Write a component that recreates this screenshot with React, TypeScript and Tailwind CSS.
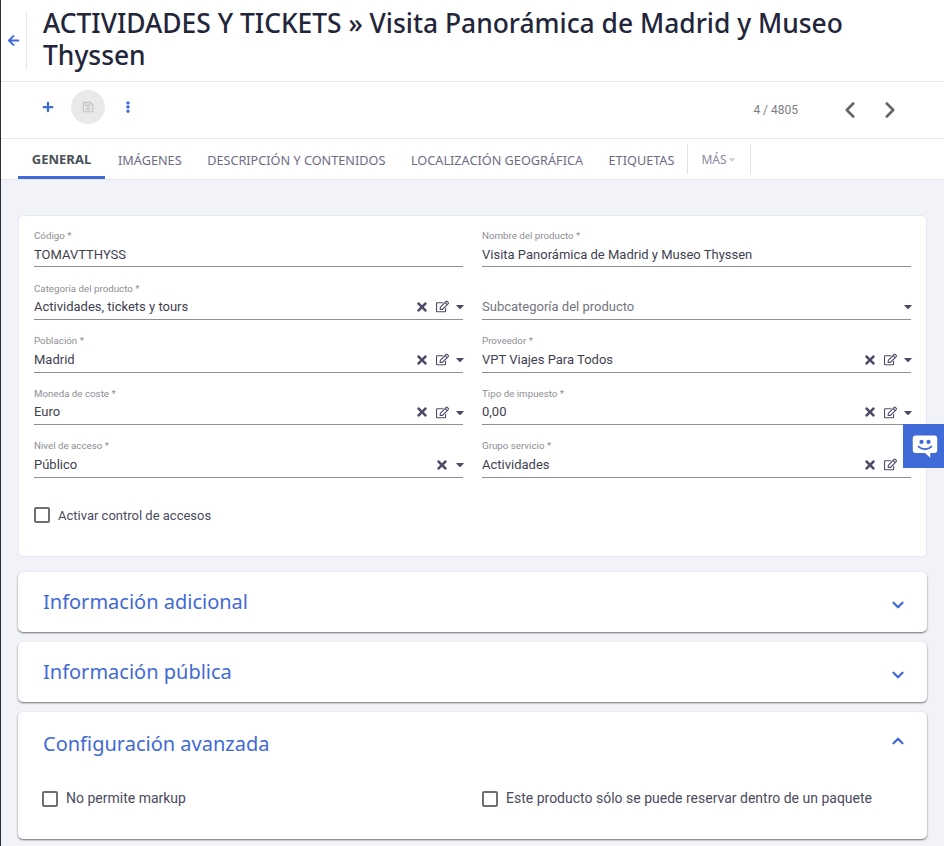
import React from 'react';
import { ChevronDown, ChevronLeft, ChevronRight, ChevronUp } from 'lucide-react';
import { FaArrowLeft, FaCaretDown, FaEllipsisV, FaPlus, FaRegEdit, FaRegSave, FaTimes } from 'react-icons/fa';

const tabs = ['IMÁGENES', 'DESCRIPCIÓN Y CONTENIDOS', 'LOCALIZACIÓN GEOGRÁFICA', 'ETIQUETAS'];

type FieldProps = {
  label?: string;
  value: string;
  clear?: boolean;
  edit?: boolean;
  caret?: boolean;
  muted?: boolean;
};

const fields: FieldProps[] = [
  { label: 'Código *', value: 'TOMAVTTHYSS' },
  { label: 'Nombre del producto *', value: 'Visita Panorámica de Madrid y Museo Thyssen' },
  { label: 'Categoría del producto *', value: 'Actividades, tickets y tours', clear: true, edit: true, caret: true },
  { value: 'Subcategoría del producto', caret: true, muted: true },
  { label: 'Población *', value: 'Madrid', clear: true, edit: true, caret: true },
  { label: 'Proveedor *', value: 'VPT Viajes Para Todos', clear: true, edit: true, caret: true },
  { label: 'Moneda de coste *', value: 'Euro', clear: true, edit: true, caret: true },
  { label: 'Tipo de impuesto *', value: '0,00', clear: true, edit: true, caret: true },
  { label: 'Nivel de acceso *', value: 'Público', clear: true, caret: true },
  { label: 'Grupo servicio *', value: 'Actividades', clear: true, edit: true },
];

const Field = ({ label, value, clear, edit, caret, muted }: FieldProps) => (
  <div className="h-[52.55px]">
    <div className="h-[14px] text-[9.75px] leading-[14px] text-[#8d8d96]">{label}</div>
    <div className="flex h-[24.45px] items-center border-b border-[#8f8f8f] pb-[0.6px]">
      <span className={`flex-1 text-[13px] ${muted ? 'text-[#74747f]' : 'text-[#3f3f52]'}`}>{value}</span>
      <div className="flex items-center text-[#4e4a67]">
        {clear && <FaTimes className="mr-[9px] h-[14px] w-[10px]" />}
        {edit && <FaRegEdit className="mr-[1px] h-[13px] w-[13px]" />}
        {caret ? (
          <FaCaretDown className={`${edit ? 'ml-[6px]' : 'ml-0'} mr-[-1px] h-[13px] w-[8px]`} />
        ) : (
          clear && <span className="ml-[6px] mr-[-1px] h-[13px] w-[8px]" />
        )}
      </div>
    </div>
  </div>
);

const Check = ({ label, big }: { label: string; big?: boolean }) => (
  <label className={`flex items-center gap-[8px] text-[#4b4b5e] ${big ? 'text-[14px]' : 'text-[13px]'}`}>
    <span className="h-[16px] w-[16px] rounded-[2px] border-2 border-[#6f6f6f] bg-white" />
    {label}
  </label>
);

const Section = ({ title, open, children }: { title: string; open?: boolean; children?: React.ReactNode }) => (
  <div className="rounded-[5px] bg-white shadow-[0_1px_2px_rgba(0,0,0,0.55)]">
    <div className="flex h-[60px] items-center justify-between pl-[25px] pr-[20px]">
      <h3 className={`font-['Noto_Sans',sans-serif] text-[20px] text-[#4169d6] ${open ? 'pt-[4px]' : ''}`}>{title}</h3>
      {open ? (
        <ChevronUp className="mb-[2px] h-[18px] w-[18px] text-[#3f6ad8]" strokeWidth={3} />
      ) : (
        <ChevronDown className="mt-[6px] h-[18px] w-[18px] text-[#3f6ad8]" strokeWidth={3} />
      )}
    </div>
    {children}
  </div>
);

export default function App() {
  return (
    <div className="relative h-[846px] overflow-hidden border-l border-[#2b2d3e] bg-[#f1f3f8] font-['Roboto',sans-serif]">
      {/* title bar */}
      <div className="flex h-[82px] items-center border-b border-[#e6e6ea] bg-white">
        <div className="flex h-[58px] w-[26px] items-center justify-center border-r border-[#e6e6ea]">
          <FaArrowLeft className="mr-[1px] h-[13px] w-[13px] text-[#3f6ad8]" />
        </div>
        <h1 className="mb-[3px] ml-[16px] w-[870px] font-['Noto_Sans',sans-serif] text-[26.4px] font-medium leading-[32px] text-[#23263a]">
          ACTIVIDADES Y TICKETS » Visita Panorámica de Madrid y Museo Thyssen
        </h1>
      </div>

      {/* toolbar */}
      <div className="flex h-[57px] items-center border-b border-[#e6e6ea] bg-white pl-[41px] pr-[41px]">
        <div className="mb-[6px] flex items-center">
          <FaPlus className="h-[12px] w-[12px] text-[#3f6ad8]" />
          <div className="ml-[17px] flex h-[34px] w-[34px] items-center justify-center rounded-full bg-[#e9e9e9]">
            <FaRegSave className="h-[12px] w-[12px] text-[#c4c4c4]" />
          </div>
          <FaEllipsisV className="ml-[17px] h-[12px] w-[12px] text-[#3f6ad8]" />
        </div>
        <span className="ml-auto text-[12px] text-[#7d7d86]">4 / 4805</span>
        <ChevronLeft className="ml-[39px] h-[26px] w-[26px] text-[#666]" strokeWidth={2.4} />
        <ChevronRight className="ml-[14px] h-[26px] w-[26px] text-[#666]" strokeWidth={2.4} />
      </div>

      {/* tabs */}
      <div className="flex h-[41px] items-stretch border-b border-[#e6e6ea] bg-white pl-[17px] font-['Noto_Sans',sans-serif] text-[12.7px] text-[#6f6b84]">
        <div className="flex w-[87px] items-center justify-center border-b-[3px] border-[#3f6ad8] pt-[5px] text-[13px] font-bold text-[#495057]">
          GENERAL
        </div>
        {tabs.map((tab, i) => (
          <div key={tab} className={`flex items-center pt-[3px] ${i === 0 ? 'ml-[13px]' : 'ml-[25.5px]'}`}>{tab}</div>
        ))}
        <div className="my-[5px] ml-[12.5px] flex w-[64px] items-center justify-center border-x border-[#e0e3ec] pt-[1px] text-[12px] text-[#8a8a9c]">
          MÁS
          <FaCaretDown className="h-[11px] w-[10px] text-[#d0d0d6]" />
        </div>
      </div>

      {/* main form */}
      <div className="px-[17px] pt-[35px]">
        <div className="h-[342px] rounded-[5px] border border-[#e6e8ef] bg-white px-[15px] pt-[13px]">
          <div className="grid grid-cols-2 gap-x-[19px]">
            {fields.map((f) => (
              <Field key={f.value} {...f} />
            ))}
          </div>
          <div className="mt-[14px]">
            <Check label="Activar control de accesos" />
          </div>
        </div>

        <div className="mt-[15px] flex flex-col gap-[10px]">
          <Section title="Información adicional" />
          <Section title="Información pública" />
          <Section title="Configuración avanzada" open>
            <div className="grid h-[67px] grid-cols-2 content-start gap-x-[19px] px-[24px] pt-[16px]">
              <Check big label="No permite markup" />
              <Check big label="Este producto sólo se puede reservar dentro de un paquete" />
            </div>
          </Section>
        </div>
      </div>

      {/* floating chat button */}
      <div className="absolute right-0 top-[424px] flex h-[44px] w-[41px] items-center justify-center bg-[#3f6ad8] pl-[3px]">
        <svg viewBox="0 0 24 24" className="h-[28px] w-[28px]">
          <path
            fill="#fff"
            d="M4 3h16a2.5 2.5 0 0 1 2.5 2.5v10A2.5 2.5 0 0 1 20 18h-3.5v4l-4.5-4H4a2.5 2.5 0 0 1-2.5-2.5v-10A2.5 2.5 0 0 1 4 3z"
          />
          <circle cx="9" cy="8.5" r="1.8" fill="#3f6ad8" />
          <circle cx="15" cy="8.5" r="1.8" fill="#3f6ad8" />
          <path d="M6.5 12.5c3 3 8 3 11 0" fill="none" stroke="#3f6ad8" strokeWidth="1.6" strokeLinecap="round" />
        </svg>
      </div>
    </div>
  );
}
